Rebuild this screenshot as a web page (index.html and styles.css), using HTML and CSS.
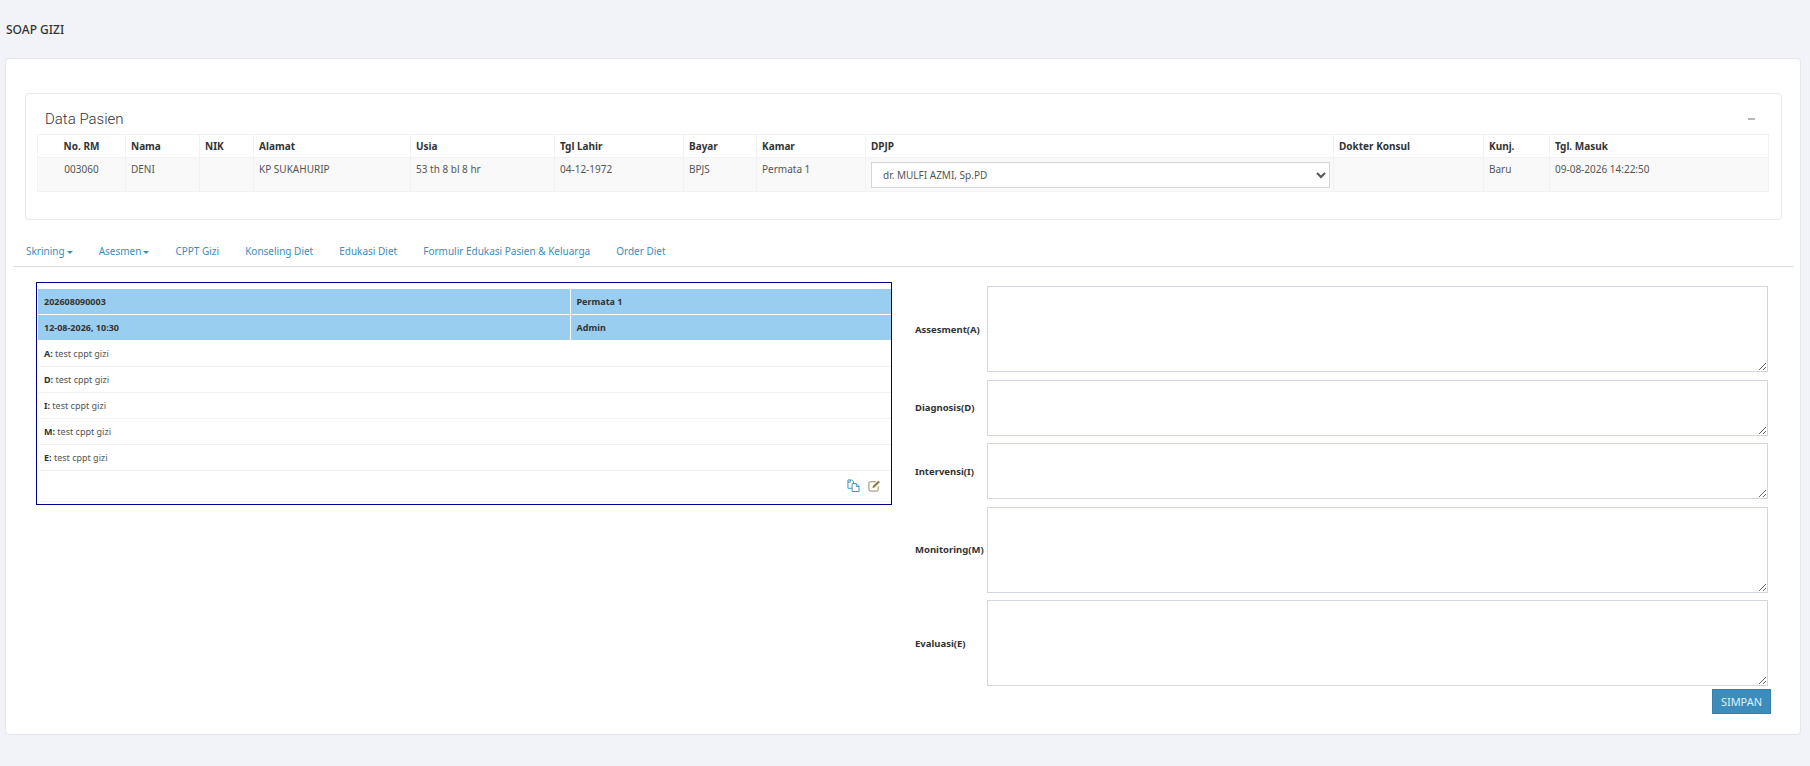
FILE: index.html
```html
<!DOCTYPE html>
<html lang="en">
<head>
    <meta charset="UTF-8">
    <title>SOAP GIZI</title>
    <link rel="stylesheet" href="styles.css">
</head>
<body>
    <div class="page-title">SOAP GIZI</div>

    <div class="card">
        <div class="panel">
            <div class="panel-head">
                <span class="panel-title">Data Pasien</span>
                <span class="panel-minus"></span>
            </div>
            <table class="pasien">
                <colgroup>
                    <col class="c-rm"><col class="c-nama"><col class="c-nik"><col class="c-alamat">
                    <col class="c-usia"><col class="c-lahir"><col class="c-bayar"><col class="c-kamar">
                    <col class="c-dpjp"><col class="c-konsul"><col class="c-kunj"><col class="c-masuk">
                </colgroup>
                <tr>
                    <th class="center">No. RM</th><th>Nama</th><th>NIK</th><th>Alamat</th>
                    <th>Usia</th><th>Tgl Lahir</th><th>Bayar</th><th>Kamar</th>
                    <th>DPJP</th><th>Dokter Konsul</th><th>Kunj.</th><th>Tgl. Masuk</th>
                </tr>
                <tr class="striped">
                    <td class="center">003060</td><td>DENI</td><td></td><td>KP SUKAHURIP</td>
                    <td>53 th 8 bl 8 hr</td><td>04-12-1972</td><td>BPJS</td><td>Permata 1</td>
                    <td class="dpjp">
                        <select class="dpjp-select">
                            <option>dr. MULFI AZMI, Sp.PD</option>
                        </select>
                    </td>
                    <td></td><td>Baru</td><td>09-08-2026 14:22:50</td>
                </tr>
            </table>
        </div>

        <ul class="tabs">
            <li><a href="#">Skrining<span class="caret"></span></a></li>
            <li><a href="#">Asesmen<span class="caret"></span></a></li>
            <li><a href="#">CPPT Gizi</a></li>
            <li><a href="#">Konseling Diet</a></li>
            <li><a href="#">Edukasi Diet</a></li>
            <li><a href="#">Formulir Edukasi Pasien &amp; Keluarga</a></li>
            <li><a href="#">Order Diet</a></li>
        </ul>

        <div class="soap">
            <div class="riwayat">
                <table class="riwayat-table">
                    <colgroup><col class="c-left"><col></colgroup>
                    <tr class="head"><td>202608090003</td><td>Permata 1</td></tr>
                    <tr class="head"><td>12-08-2026, 10:30</td><td>Admin</td></tr>
                    <tr class="line"><td colspan="2"><b>A:</b> test cppt gizi</td></tr>
                    <tr class="line"><td colspan="2"><b>D:</b> test cppt gizi</td></tr>
                    <tr class="line"><td colspan="2"><b>I:</b> test cppt gizi</td></tr>
                    <tr class="line"><td colspan="2"><b>M:</b> test cppt gizi</td></tr>
                    <tr class="line"><td colspan="2"><b>E:</b> test cppt gizi</td></tr>
                    <tr class="line actions">
                        <td colspan="2">
                            <svg class="icon icon-copy" viewBox="0 0 14 14">
                                <path d="M1 1h4l2 2v2M1 1v9h4.500M3.500 1v2.500h-2.500"/>
                                <path d="M5.500 5h4.500l3 3v5.500h-7.500zM10 5v3h3"/>
                            </svg>
                            <svg class="icon icon-edit" viewBox="0 0 14 14">
                                <path d="M11 8v3.500a1.500 1.500 0 0 1-1.500 1.500h-7a1.500 1.500 0 0 1-1.500-1.500v-7a1.500 1.500 0 0 1 1.500-1.500h6"/>
                                <path class="pencil" d="M5 7.500l6-6 2 2-6 6-2.500.5z"/>
                            </svg>
                        </td>
                    </tr>
                </table>
            </div>

            <form class="soap-form">
                <label>Assesment(A)</label>
                <textarea class="tall"></textarea>
                <label>Diagnosis(D)</label>
                <textarea class="short"></textarea>
                <label>Intervensi(I)</label>
                <textarea class="short"></textarea>
                <label>Monitoring(M)</label>
                <textarea class="tall"></textarea>
                <label>Evaluasi(E)</label>
                <textarea class="tall"></textarea>
                <div class="form-foot">
                    <button type="button" class="btn-simpan">SIMPAN</button>
                </div>
            </form>
        </div>
    </div>
</body>
</html>
```

FILE: styles.css
```css
body {
    font-family: "Noto Sans", "Open Sans", sans-serif;
    font-size: 10px;
    margin: 0;
    background: #f1f3f8;
    color: #333;
}
.page-title {
    height: 58px;
    line-height: 60px;
    padding-left: 6px;
    font-size: 12px;
    font-weight: 500;
    color: #333;
}
.card {
    width: 1794px;
    height: 675px;
    margin-left: 5px;
    background: #fff;
    border: 1px solid #e4e6eb;
    border-radius: 4px;
}
.panel {
    margin: 34px 18px 0 19px;
    height: 125px;
    padding: 0 13px 0 11px;
    border: 1px solid #e6e8ec;
    border-radius: 4px;
}
.panel-head {
    height: 40px;
    display: flex;
    align-items: center;
    justify-content: space-between;
    padding: 10px 13px 0 8px;
    box-sizing: border-box;
}
.panel-title {
    font-family: Roboto, sans-serif;
    font-size: 15px;
    font-weight: 300;
    color: #333;
}
.panel-minus {
    width: 7px;
    height: 2px;
    background: #b4b8c0;
}
.pasien {
    width: 1731px;
    table-layout: fixed;
    border-collapse: collapse;
}
.pasien th, .pasien td {
    border: 1px solid #f2f2f2;
    padding: 0 5px;
    text-align: left;
    vertical-align: top;
    font-size: 10px;
}
.pasien th {
    height: 22px;
    line-height: 22px;
    font-weight: 700;
}
.pasien td {
    height: 33px;
    line-height: 22px;
    color: #555;
}
.pasien .center {
    text-align: center;
}
.striped {
    background: #f9f9f9;
}
.c-rm { width: 88px; }
.c-nama { width: 74px; }
.c-nik { width: 54px; }
.c-alamat { width: 157px; }
.c-usia { width: 144px; }
.c-lahir { width: 129px; }
.c-bayar { width: 73px; }
.c-kamar { width: 109px; }
.c-dpjp { width: 468px; }
.c-konsul { width: 150px; }
.c-kunj { width: 66px; }
.c-masuk { width: 219px; }
.pasien td.dpjp {
    height: 29px;
    padding: 4px 3px 0 5px;
}
.dpjp-select {
    display: block;
    width: 100%;
    height: 26px;
    padding: 0 7px;
    font-family: inherit;
    font-size: 10px;
    color: #555;
    background: #fff;
    border: 1px solid #d2d6de;
}
.tabs {
    list-style: none;
    display: flex;
    height: 47px;
    margin: 0 6px 0 7px;
    padding: 0;
    border-bottom: 1px solid #ddd;
    box-sizing: border-box;
}
.tabs a {
    display: block;
    padding: 0 13px;
    line-height: 63px;
    height: 46px;
    font-size: 10px;
    color: #3c8dbc;
    text-decoration: none;
}
.caret {
    display: inline-block;
    margin-left: 2px;
    vertical-align: middle;
    border-top: 3px solid #3c8dbc;
    border-left: 3px solid transparent;
    border-right: 3px solid transparent;
}
.soap {
    display: grid;
    grid-template-columns: 856px 880px;
    column-gap: 23px;
    margin: 15px 0 0 30px;
}
.riwayat {
    align-self: start;
    box-sizing: border-box;
    height: 223px;
    padding: 6px 0 0 1px;
    border: 1px solid #00008b;
}
.riwayat-table {
    width: 100%;
    table-layout: fixed;
    border-collapse: collapse;
    font-size: 9px;
}
.c-left { width: 532px; }
.riwayat-table td {
    padding: 0 6px;
}
.head td {
    height: 25px;
    background: #99cef0;
    border-bottom: 1px solid #fff;
    font-weight: 700;
    color: #333;
}
.head td:first-child {
    border-right: 1px solid #fff;
}
.line td {
    height: 25px;
    border-bottom: 1px solid #f2f2f2;
    color: #555;
}
.line b {
    color: #333;
}
.actions td {
    height: 28px;
    text-align: right;
    padding: 0 10px 2px 0;
}
.icon {
    width: 13px;
    height: 13px;
    margin-left: 6px;
    fill: none;
    stroke-width: 1;
    vertical-align: middle;
}
.icon-copy {
    stroke: #3c8dbc;
}
.icon-edit {
    stroke: #8a7a4b;
}
.icon-edit .pencil {
    fill: #8a7a4b;
    stroke: #fff;
    stroke-width: 0.500;
}
.soap-form {
    display: grid;
    grid-template-columns: 72px 781px;
    row-gap: 7.500px;
    align-items: center;
    margin-top: 4px;
}
.soap-form label {
    font-size: 9.500px;
    font-weight: 700;
    color: #333;
}
.soap-form textarea {
    display: block;
    width: 100%;
    box-sizing: border-box;
    border: 1px solid #d2d6de;
    background: #fff;
}
.tall {
    height: 86px;
}
.short {
    height: 56px;
}
.form-foot {
    grid-column: 1 / -1;
    display: flex;
    justify-content: flex-end;
    margin: -4.500px -3px 0 0;
}
.btn-simpan {
    width: 59px;
    height: 25px;
    padding: 0;
    font-family: inherit;
    font-size: 11px;
    color: #dff1fb;
    background: #3c8dbc;
    border: 1px solid #367fa9;
}
```
